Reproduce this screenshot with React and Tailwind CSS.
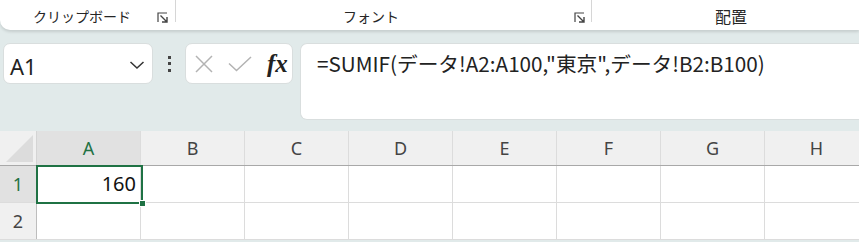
import React from 'react';

const COLS = ['A', 'B', 'C', 'D', 'E', 'F', 'G', 'H'];
const ui = { fontFamily: '"Noto Sans", "Noto Sans CJK JP", sans-serif' };
const jp = { fontFamily: '"Noto Sans CJK JP", sans-serif' };

const Launcher = () => (
  <svg width="11" height="11" viewBox="0 0 11 11" className="text-[#444]">
    <path d="M1 10V1h9" fill="none" stroke="currentColor" strokeWidth="1.2" />
    <path d="M3.5 3.5l6 6M5 10h5V5" fill="none" stroke="currentColor" strokeWidth="1.4" />
  </svg>
);

const Ribbon = () => (
  <div className="h-[30px] bg-white rounded-bl-[10px] shadow-[0_2px_3px_rgba(0,0,0,0.12)] flex text-[14px] text-[#262626] shrink-0" style={jp}>
    <div className="w-[175px] flex items-center">
      <span className="pl-[33px] pt-[2px]">クリップボード</span>
      <span className="ml-auto mr-[7px] mt-[4px]"><Launcher /></span>
    </div>
    <div className="w-px h-[22px] bg-[#d6d6d6]" />
    <div className="w-[415px] flex items-center">
      <span className="pl-[167px] pt-[2px]">フォント</span>
      <span className="ml-auto mr-[6px] mt-[4px]"><Launcher /></span>
    </div>
    <div className="w-px h-[22px] bg-[#d6d6d6]" />
    <div className="flex-1 flex items-center">
      <span className="pl-[123px] pt-[2px] text-[16px]">配置</span>
    </div>
  </div>
);

const FormulaRow = () => (
  <div className="flex items-start mt-[13px] pl-[3px] shrink-0">
    <div className="w-[150px] h-[41px] bg-white rounded-[7px] border border-[#d9dede] flex items-center pl-[6px] pr-[6px]">
      <span className="text-[22px] text-[#222] leading-none pt-[4px]" style={ui}>A1</span>
      <svg width="16" height="10" viewBox="0 0 16 10" className="ml-auto mr-[1px] mt-[2px]">
        <path d="M1.5 2l6.5 6 6.5-6" fill="none" stroke="#333" strokeWidth="1.5" />
      </svg>
    </div>
    <div className="w-[32px] h-[41px] flex flex-col items-center justify-center gap-[3.5px]">
      <span className="w-[3px] h-[3px] bg-[#444]" />
      <span className="w-[3px] h-[3px] bg-[#444]" />
      <span className="w-[3px] h-[3px] bg-[#444]" />
    </div>
    <div className="w-[108px] h-[41px] bg-white rounded-[7px] border border-[#d9dede] flex items-center pl-[8px]">
      <svg width="20" height="20" viewBox="0 0 20 20">
        <path d="M2 2l16 16M18 2L2 18" stroke="#b3b3b3" strokeWidth="1.5" fill="none" />
      </svg>
      <svg width="24" height="20" viewBox="0 0 24 20" className="ml-[14px]">
        <path d="M1 9.5l7.5 7L23 3" stroke="#b3b3b3" strokeWidth="1.5" fill="none" />
      </svg>
      <span className="ml-[15px] text-[25px] italic font-bold text-[#222] leading-none" style={{ fontFamily: '"Liberation Serif", serif' }}>fx</span>
    </div>
    <div className="ml-[7px] flex-1 h-[77px] bg-white rounded-l-[7px] border border-r-0 border-[#d9dede] pl-[16px] pt-[6px]">
      <span className="text-[20.7px] text-[#222] leading-[26px]" style={jp}>=SUMIF(データ!A2:A100,"東京",データ!B2:B100)</span>
    </div>
  </div>
);

const Grid = () => (
  <div className="mt-[11px] relative bg-white" style={ui}>
    <div className="flex h-[35px] bg-[#f0f0f0] border-b border-[#a8a8a8]">
      <div className="w-[37px] shrink-0 border-r border-[#d4d4d4] flex items-end justify-end pr-[3px] pb-[3px]">
        <svg width="27" height="27" viewBox="0 0 27 27">
          <path d="M27 0V27H0Z" fill="#dcdcdc" />
        </svg>
      </div>
      {COLS.map((c) => (
        <div
          key={c}
          className={`w-[104px] shrink-0 border-r border-[#dcdcdc] flex items-center justify-center text-[18px] ${c === 'A' ? 'bg-[#e1e1e1] text-[#1f7244]' : 'text-[#444]'}`}
        >
          {c}
        </div>
      ))}
    </div>
    {[1, 2].map((r) => (
      <div key={r} className="flex h-[37px] border-b border-[#dcdcdc]">
        <div
          className={`w-[37px] shrink-0 border-r border-[#bdbdbd] flex items-center justify-center text-[18px] ${r === 1 ? 'bg-[#e1e1e1] text-[#1f7244]' : 'bg-[#f0f0f0] text-[#444]'}`}
        >
          {r}
        </div>
        {COLS.map((c) => (
          <div key={c} className="w-[104px] shrink-0 border-r border-[#dcdcdc] flex items-center justify-end pr-[4px] text-[20px] text-[#111]">
            {r === 1 && c === 'A' ? '160' : ''}
          </div>
        ))}
      </div>
    ))}
    <div className="absolute left-[36px] top-[34px] w-[107px] h-[39px] border-2 border-[#1f7244] pointer-events-none">
      <div className="absolute -right-[5px] -bottom-[5px] w-[7px] h-[7px] bg-[#1f7244] border border-white" />
    </div>
  </div>
);

export default function App() {
  return (
    <div className="w-[859px] h-[242px] bg-[#e1eaea] overflow-hidden flex flex-col">
      <Ribbon />
      <FormulaRow />
      <Grid />
    </div>
  );
}
